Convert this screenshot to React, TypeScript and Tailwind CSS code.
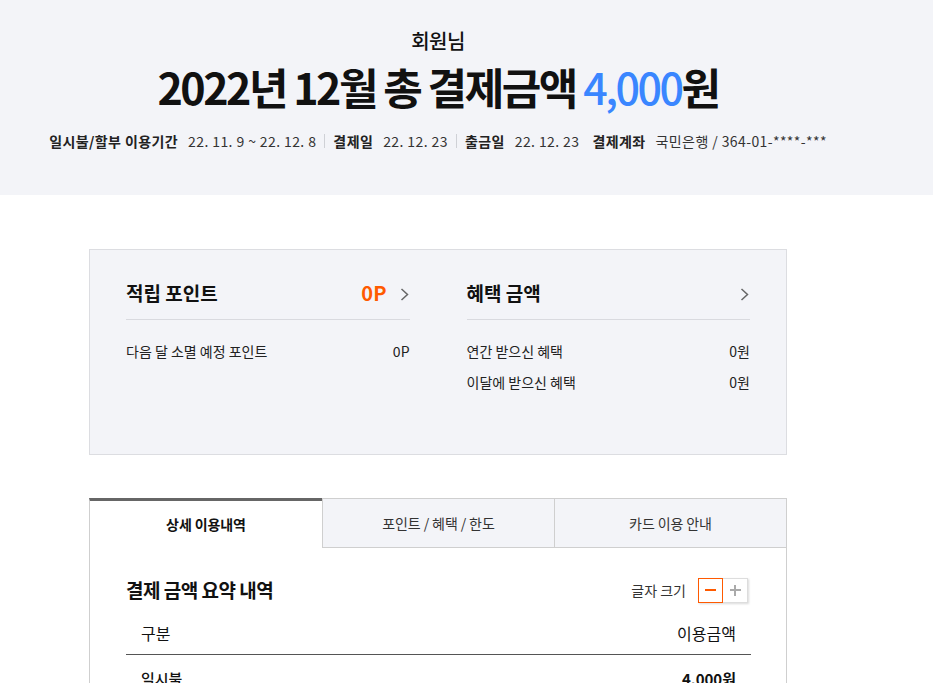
const font = { fontFamily: '"Noto Sans CJK KR", "Noto Sans", sans-serif' };

function Chevron() {
  return (
    <svg width="9" height="13" viewBox="0 0 9 13" className="text-[#666]">
      <path d="M1.5 1l6 5.5-6 5.5" fill="none" stroke="currentColor" strokeWidth="1.5" />
    </svg>
  );
}

function InfoItem({ label, value, divider }: { label: string; value: string; divider?: boolean }) {
  return (
    <div className="flex items-center">
      {divider && <span className="mx-[8px] h-[14px] w-px bg-[#cfd1d6]" />}
      <span className="font-bold text-[#222]">{label}</span>
      <span className="ml-[10px] text-[#333]">{value}</span>
    </div>
  );
}

function SummaryRow({ label, value }: { label: string; value: string }) {
  return (
    <div className="flex justify-between text-[14px] leading-[31px] text-[#222]">
      <span>{label}</span>
      <span>{value}</span>
    </div>
  );
}

export default function App() {
  return (
    <div className="min-h-screen bg-white" style={font}>
      <header className="h-[195px] w-full bg-[#f3f4f8]">
        <div className="flex w-[876px] flex-col items-center pt-[26px]">
          <p className="text-[20px] font-medium leading-[30px] text-[#111] tracking-[-0.5px]">회원님</p>
          <h1 className="mt-[2px] text-[43px] font-bold leading-[56px] tracking-[-2.5px] text-[#111]">
            2022년 12월 총 결제금액 <span className="font-medium text-[#3a86ff]">4,000</span>원
          </h1>
          <div className="mt-[17px] flex items-center text-[14px] leading-[20px] tracking-[0.4px]">
            <InfoItem label="일시불/할부 이용기간" value="22. 11. 9 ~ 22. 12. 8" />
            <InfoItem label="결제일" value="22. 12. 23" divider />
            <InfoItem label="출금일" value="22. 12. 23" divider />
            <div className="ml-[13px] flex items-center">
              <span className="font-bold text-[#222]">결제계좌</span>
              <span className="ml-[10px] text-[#333]">국민은행 / 364-01-****-***</span>
            </div>
          </div>
        </div>
      </header>

      <main className="ml-[89px] w-[698px] pt-[54px]">
        <section className="flex h-[206px] gap-[57px] border border-[#dcdde1] bg-[#f3f4f8] px-[36px] pt-[28px]">
          <div className="w-[284px]">
            <div className="flex h-[42px] items-start justify-between border-b border-[#d9dadf]">
              <span className="text-[19px] font-bold leading-[30px] text-[#111]">적립 포인트</span>
              <div className="flex h-[30px] items-center">
                <span className="text-[20px] font-bold leading-[30px] text-[#ff5a00]">0P</span>
                <span className="ml-[13px] mr-[1px] mt-[2px] flex">
                  <Chevron />
                </span>
              </div>
            </div>
            <div className="pt-[16px]">
              <SummaryRow label="다음 달 소멸 예정 포인트" value="0P" />
            </div>
          </div>
          <div className="w-[284px]">
            <div className="flex h-[42px] items-start justify-between border-b border-[#d9dadf]">
              <span className="text-[19px] font-bold leading-[30px] text-[#111]">혜택 금액</span>
              <span className="mr-[1px] mt-[10px] flex">
                <Chevron />
              </span>
            </div>
            <div className="pt-[16px]">
              <SummaryRow label="연간 받으신 혜택" value="0원" />
              <SummaryRow label="이달에 받으신 혜택" value="0원" />
            </div>
          </div>
        </section>

        <div className="mt-[43px] flex h-[50px] text-[14px] tracking-[-0.1px]">
          <button className="flex w-[233px] items-center justify-center border-l border-t-[3px] border-l-[#cfcfcf] border-t-[#666] bg-white font-bold text-[#111]">
            상세 이용내역
          </button>
          <button className="flex w-[233px] items-center justify-center border border-[#cfcfcf] bg-[#f3f4f8] text-[#333]">
            포인트 / 혜택 / 한도
          </button>
          <button className="flex w-[232px] items-center justify-center border-y border-r border-[#cfcfcf] bg-[#f3f4f8] text-[#333]">
            카드 이용 안내
          </button>
        </div>

        <div className="h-[200px] border-x border-[#cfcfcf] bg-white pl-[36px] pr-[35px] pt-[27px]">
          <div className="flex items-center justify-between">
            <h2 className="text-[19px] font-bold leading-[30px] tracking-[-0.5px] text-[#111]">결제 금액 요약 내역</h2>
            <div className="mr-[3px] flex items-center">
              <span className="mr-[12px] text-[14px] text-[#333]">글자 크기</span>
              <div className="flex shadow-[1px_1px_2px_rgba(0,0,0,0.15)]">
                <button className="flex h-[25px] w-[25px] items-center justify-center border border-[#ff5a00] bg-white">
                  <span className="h-[2px] w-[11px] bg-[#ff5a00]" />
                </button>
                <button className="relative flex h-[25px] w-[25px] items-center justify-center border-y border-r border-[#ddd] bg-white">
                  <span className="absolute h-[2px] w-[11px] bg-[#aaa]" />
                  <span className="absolute h-[11px] w-[2px] bg-[#aaa]" />
                </button>
              </div>
            </div>
          </div>
          <div className="mt-[6px] flex h-[44px] items-center justify-between border-b border-[#555] px-[15px] text-[16px] text-[#111]">
            <span>구분</span>
            <span>이용금액</span>
          </div>
          <div className="flex h-[48px] items-center justify-between px-[15px] text-[15px] text-[#111]">
            <span className="font-medium">일시불</span>
            <span className="font-bold">4,000원</span>
          </div>
        </div>
      </main>
    </div>
  );
}
